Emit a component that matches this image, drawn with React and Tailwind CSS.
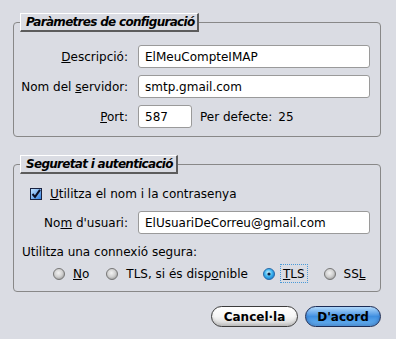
import React from 'react';

const Field = ({ label, value, width }) => (
  <div className="flex items-center h-[23px]">
    <div className="w-[114px] text-right">{label}</div>
    <div
      className={`ml-[10px] h-[23px] flex items-center bg-white border border-[#9a9a9a] rounded-[3px] pl-[6px] ${
        width ? width : 'flex-1'
      }`}
    >
      {value}
    </div>
  </div>
);

const Legend = ({ children }) => (
  <legend className="ml-[6px] h-[19px] pl-[5px] pr-[3px] flex items-center bg-[#dadce3] border-t border-l border-white border-r-2 border-b-2 border-r-[#5c5c5c] border-b-[#5c5c5c] font-bold italic tracking-[-0.7px]">
    {children}
  </legend>
);

const CheckBox = () => (
  <svg width="12" height="12" viewBox="0 0 12 12">
    <defs>
      <linearGradient id="cb" x1="0" y1="0" x2="1" y2="1">
        <stop offset="0" stopColor="#c9e6ff" />
        <stop offset="1" stopColor="#2f7fe0" />
      </linearGradient>
    </defs>
    <rect x="0.5" y="0.5" width="11" height="11" fill="url(#cb)" stroke="#1a2340" />
    <path d="M2.5 6 L5 8.8 L10 1.8" fill="none" stroke="#0b0f26" strokeWidth="2" />
  </svg>
);

const Radio = ({ checked }) => (
  <svg width="12" height="12" viewBox="0 0 12 12">
    <defs>
      <radialGradient id="ru" cx="0.45" cy="0.4" r="0.6">
        <stop offset="0" stopColor="#f2f2f2" />
        <stop offset="0.6" stopColor="#d0d0d0" />
        <stop offset="1" stopColor="#a0a0a0" />
      </radialGradient>
      <radialGradient id="rc" cx="0.45" cy="0.4" r="0.6">
        <stop offset="0" stopColor="#d9f6ff" />
        <stop offset="0.55" stopColor="#3fb6f0" />
        <stop offset="1" stopColor="#1a7fcf" />
      </radialGradient>
    </defs>
    <circle
      cx="6"
      cy="6"
      r="5.5"
      fill={checked ? 'url(#rc)' : 'url(#ru)'}
      stroke={checked ? '#2a6aa8' : '#777777'}
    />
    {checked && <circle cx="6" cy="6" r="1.6" fill="#0a2040" />}
  </svg>
);

export default function App() {
  return (
    <div className="w-[396px] h-[339px] bg-[#dadce3] pt-[13px] pl-[13px] pr-[15px] font-['DejaVu_Sans',sans-serif] text-[12px] text-black">
      {/* Paràmetres */}
      <fieldset className="border border-[#888888] rounded-[4px] pb-[8px] pr-[10px]">
        <Legend>Paràmetres de configuració</Legend>
        <div className="mt-[13px] flex flex-col gap-[7px]">
          <Field label={<><u>D</u>escripció:</>} value="ElMeuCompteIMAP" />
          <Field label={<>Nom del <u>s</u>ervidor:</>} value="smtp.gmail.com" />
          <div className="flex items-center h-[23px]">
            <div className="w-[114px] text-right">
              <u>P</u>ort:
            </div>
            <div className="ml-[10px] w-[54px] h-[23px] flex items-center bg-white border border-[#9a9a9a] rounded-[3px] pl-[6px]">
              587
            </div>
            <span className="ml-[8px]">Per defecte:</span>
            <span className="ml-[6px]">25</span>
          </div>
        </div>
      </fieldset>

      {/* Seguretat */}
      <fieldset className="mt-[18px] border border-[#888888] rounded-[4px] pb-[8px] pr-[10px]">
        <Legend>Seguretat i autenticació</Legend>
        <div className="mt-[11px] h-[18px] flex items-center pl-[16px]">
          <CheckBox />
          <span className="ml-[8px]">
            <u>U</u>tilitza el nom i la contrasenya
          </span>
        </div>
        <div className="mt-[8px]">
          <Field label={<>No<u>m</u> d'usuari:</>} value="ElUsuariDeCorreu@gmail.com" />
        </div>
        <div className="mt-[9px] h-[18px] leading-[18px] pl-[8px]">Utilitza una connexió segura:</div>
        <div className="mt-[3px] h-[19px] flex items-center pl-[39px]">
          <Radio />
          <span className="ml-[8px]">
            <u>N</u>o
          </span>
          <span className="ml-[17px] flex">
            <Radio />
          </span>
          <span className="ml-[8px]">
            TLS, si és disp<u>o</u>nible
          </span>
          <span className="ml-[15px] flex">
            <Radio checked />
          </span>
          <span className="ml-[5px] h-[19px] px-[2px] flex items-center border border-dotted border-[#4a9ad8]">
            <u>T</u>LS
          </span>
          <span className="ml-[16px] flex">
            <Radio />
          </span>
          <span className="ml-[8px]">
            SS<u>L</u>
          </span>
        </div>
      </fieldset>

      {/* Botons */}
      <div className="mt-[14px] flex justify-end gap-[7px]">
        <button className="w-[87px] h-[21px] rounded-full border border-[#3c3c3c] bg-linear-to-b from-[#ffffff] via-[#f6f6f6] to-[#d2d2d2] font-bold text-[12px] shadow-[inset_0_-2px_3px_rgba(0,0,0,0.12)]">
          Cancel·la
        </button>
        <button className="w-[76px] h-[21px] rounded-full border border-[#1c2c55] bg-linear-to-b from-[#b0d9fb] via-[#3f8fe0] to-[#6db8f4] font-bold text-[12px] shadow-[inset_0_-2px_3px_rgba(0,40,120,0.3)]">
          D'acord
        </button>
      </div>
    </div>
  );
}
